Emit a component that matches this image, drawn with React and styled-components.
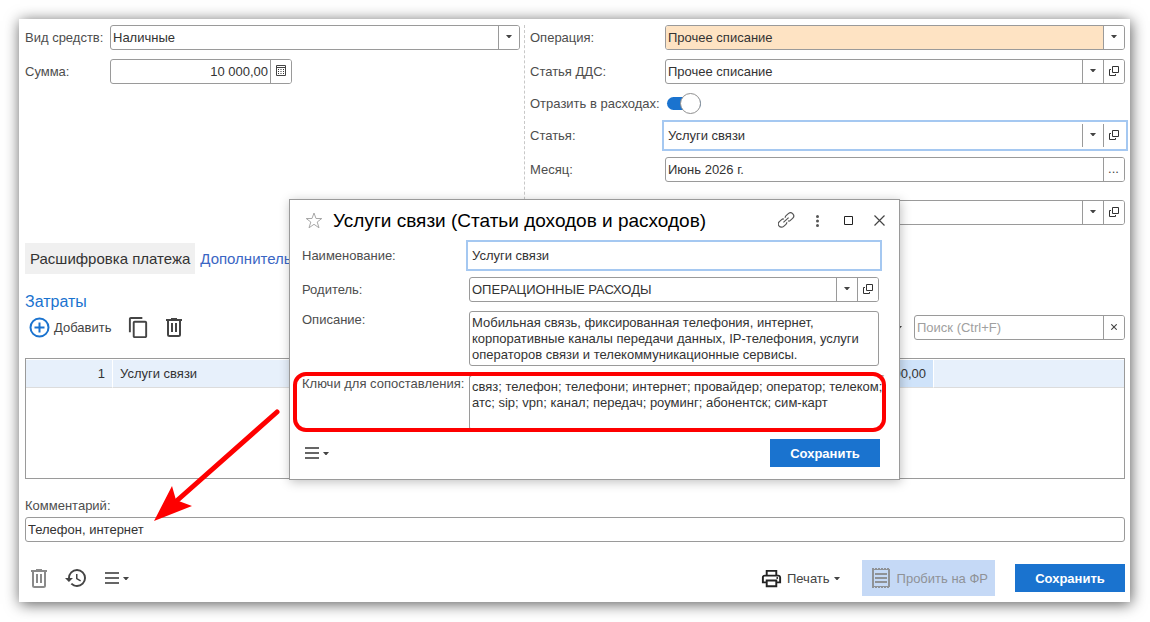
import styled, { createGlobalStyle } from "styled-components";
import { MdContentCopy, MdHistory, MdOutlinePrint } from "react-icons/md";

const GlobalStyle = createGlobalStyle`
  * {
    box-sizing: border-box;
  }

  body {
    margin: 0;
    background: #fff;
    color: #333;
    font-family: "Liberation Sans", Arial, sans-serif;
    font-size: 13px;
  }

  input, select, textarea, button {
    font: inherit;
    color: inherit;
  }
`;

const Page = styled.div`
  padding: 19px 20px 20px 19px;
`;

const Window = styled.main`
  position: relative;
  padding: 6px 5px 6px 6px;
  background: #fff;
  box-shadow: 1px 2px 14px rgba(0, 0, 0, 0.65);
`;

const FormGrid = styled.div`
  display: grid;
  grid-template-columns: 45fr 55fr;
`;

const Column = styled.div`
  display: flex;
  flex-direction: column;
  gap: 9px;
`;

const RightColumn = styled(Column)`
  margin-left: 4px;
  padding-left: 5px;
  border-left: 1px dashed #c8c8c8;
`;

const Row = styled.div`
  display: flex;
  align-items: ${(p) => (p.$top ? "flex-start" : "center")};
  min-height: ${(p) => (p.$short ? "21px" : "25px")};
  margin-top: ${(p) => (p.$spaced ? "9px" : "0")};
`;

const Label = styled.label`
  flex: none;
  width: ${(p) => p.$width || "auto"};
  line-height: 18px;
  white-space: nowrap;
  color: #4d4d4d;
`;

const Field = styled.div`
  display: flex;
  flex: ${(p) => (p.$width ? "none" : "1")};
  width: ${(p) => p.$width || "auto"};
  min-width: 0;
  height: 25px;
  overflow: hidden;
  background: #fff;
  border: 1px solid ${(p) => (p.$focused ? "transparent" : "#9a9a9a")};
  border-radius: ${(p) => (p.$focused ? "0" : "3px")};
  outline: ${(p) => (p.$focused ? "2px solid #a5c8f1" : "none")};
  outline-offset: 1px;
`;

const TextInput = styled.input`
  flex: 1;
  min-width: 0;
  padding: 0 2px;
  border: 0;
  outline: 0;
  background: transparent;
  text-align: ${(p) => (p.$right ? "right" : "left")};

  &::placeholder {
    color: #a0a0a0;
  }
`;

const Select = styled.select`
  flex: 1;
  min-width: 0;
  padding: 0 2px;
  border: 0;
  border-radius: 0;
  outline: 0;
  appearance: none;
  background: ${(p) => (p.$accent ? "#fee3c3" : "transparent")};
`;

const FieldButton = styled.button`
  display: flex;
  flex: none;
  align-items: center;
  justify-content: center;
  width: 21px;
  padding: 0 1px 2px 0;
  border: 0;
  border-left: 1px solid #9a9a9a;
  background: #fff;
  color: #444;
`;

const TextArea = styled.textarea`
  flex: 1;
  min-width: 0;
  height: 55px;
  padding: 3px 0 3px 2px;
  border: 1px solid #9a9a9a;
  border-radius: 3px;
  outline: 0;
  resize: none;
  overflow: hidden;
  line-height: 16px;
  white-space: pre;
`;

const KeysArea = styled(TextArea)`
  margin-right: -6px;
  border-color: #9a9a9a transparent transparent #9a9a9a;
`;

const Toggle = styled.input`
  display: flex;
  align-items: center;
  justify-content: flex-end;
  width: 34px;
  height: 13px;
  margin: 0 2px;
  appearance: none;
  border-radius: 7px;
  background: #1a73cf;

  &::after {
    content: "";
    flex: none;
    width: 19px;
    height: 19px;
    border: 1px solid #8f8f8f;
    border-radius: 50%;
    background: #fff;
  }
`;

const Tabs = styled.nav`
  display: flex;
  margin-top: 18px;
`;

const Tab = styled.button`
  height: 31px;
  padding: 0 5px;
  border: 0;
  background: ${(p) => (p.$active ? "#f0f0f0" : "transparent")};
  color: ${(p) => (p.$active ? "#333" : "#3a66c4")};
  font-size: 15px;
  white-space: nowrap;
`;

const SectionTitle = styled.h2`
  margin: 19px 0 4px;
  color: #1a73cf;
  font-size: 16px;
  font-weight: normal;
  line-height: 18px;
`;

const Toolbar = styled.div`
  display: flex;
  align-items: center;
  height: 25px;
  padding-left: 4px;
`;

const ToolButton = styled.button`
  display: flex;
  align-items: center;
  gap: 4px;
  margin: 0;
  padding: 0;
  border: 0;
  background: transparent;
  color: #444;
`;

const TitleButton = styled(ToolButton)`
  justify-content: center;
  width: 31px;
  height: 24px;
`;

const ToolGroup = styled.div`
  display: flex;
  align-items: center;
  gap: ${(p) => p.$gap || "0"};
`;

const Spacer = styled.div`
  flex: 1;
`;

const TableBox = styled.div`
  min-height: 121px;
  margin-top: 18px;
  border: 1px solid #9a9a9a;
`;

const Table = styled.table`
  width: 100%;
  table-layout: fixed;
  border-collapse: separate;
  border-spacing: 0;
`;

const Cell = styled.td`
  width: ${(p) => p.$width || "auto"};
  height: 29px;
  padding: 0 7px;
  border-top: 1px solid #fff;
  border-right: 1px solid #fff;
  border-bottom: 1px solid #dcdcdc;
  background: ${(p) => (p.$selected ? "#cfe3fa" : "#e7f0fb")};
  background-clip: padding-box;
  text-align: ${(p) => (p.$right ? "right" : "left")};

  &:last-child {
    border-right: 0;
  }
`;

const CommentBlock = styled.div`
  display: flex;
  flex-direction: column;
  gap: 2px;
  margin-top: 18px;

  ${Field} {
    flex: none;
  }
`;

const Footer = styled.footer`
  display: flex;
  align-items: center;
  height: 36px;
  margin-top: 18px;
  padding-left: 6px;
`;

const PrimaryButton = styled.button`
  width: 110px;
  height: 28px;
  padding: 0;
  border: 0;
  background: #1a73cf;
  color: #fff;
  font-weight: bold;
`;

const ReceiptButton = styled.button`
  display: flex;
  align-items: center;
  gap: 7px;
  height: 36px;
  margin: 0 20px 0 22px;
  padding: 0 7px 0 10px;
  border: 0;
  background: #c5d9f6;
  color: #8f9296;
`;

const Dialog = styled.section`
  position: absolute;
  top: 180px;
  left: 270px;
  width: 611px;
  padding: 0 20px 12px 12px;
  border: 1px solid #9a9a9a;
  background: #fff;
  box-shadow: 1px 2px 10px rgba(0, 0, 0, 0.25);
`;

const DialogHeader = styled.header`
  display: flex;
  align-items: center;
  height: 41px;
  margin: 0 -16px 2px 0;
  padding-left: 3px;
`;

const DialogTitle = styled.h1`
  flex: 1;
  margin: 0 0 0 10px;
  color: #000;
  font-size: 19px;
  font-weight: normal;
  white-space: nowrap;
`;

const DialogFooter = styled.footer`
  display: flex;
  align-items: center;
  justify-content: space-between;
  height: 28px;
  margin: 9px -1px 0 3px;
`;

const Highlight = styled.div`
  position: absolute;
  top: 172px;
  left: 3px;
  right: 13px;
  height: 60px;
  border: 4px solid #fe0000;
  border-radius: 13px;
  pointer-events: none;
`;

const Arrow = styled.svg`
  position: absolute;
  top: 386px;
  left: 131px;
  pointer-events: none;
`;

function Caret() {
  return (
    <svg width="6" height="3" viewBox="0 0 6 3" aria-hidden="true">
      <path d="M0 0h6L3.5 3h-1z" fill="#444" />
    </svg>
  );
}

function OpenIcon() {
  return (
    <svg width="10" height="10" viewBox="0 0 10 10" fill="none" stroke="#333" aria-hidden="true">
      <path d="M3.5 0.5h6v6h-6z" />
      <path d="M2 3.5H0.5v6h6V8" />
    </svg>
  );
}

function CalculatorIcon() {
  return (
    <svg width="10" height="11" viewBox="0 0 10 11" aria-hidden="true">
      <path d="M0.5 0.5h9v10h-9zM0 2.5h10" fill="none" stroke="#444" />
      <path
        d="M2 4h1v1H2zM4.5 4h1v1h-1zM7 4h1v1H7zM2 6h1v1H2zM4.5 6h1v1h-1zM7 6h1v1H7zM2 8h1v1H2zM4.5 8h1v1h-1zM7 8h1v1H7z"
        fill="#333"
      />
    </svg>
  );
}

function AddIcon() {
  return (
    <svg width="21" height="21" viewBox="0 0 21 21" fill="none" stroke="#1a73cf" strokeWidth="2" aria-hidden="true">
      <circle cx="10.5" cy="10.5" r="9" />
      <path d="M10.5 5.5v10M5.5 10.5h10" />
    </svg>
  );
}

function TrashIcon({ color = "#444" }) {
  return (
    <svg width="16" height="19" viewBox="0 0 16 19" fill="none" stroke={color} strokeWidth="2" aria-hidden="true">
      <path d="M0 2h16M5 1h6" />
      <path d="M2 3v13.5q0 1.5 1.5 1.5h9q1.5 0 1.5-1.5V3" />
      <path d="M6 5v9M10 5v9" />
    </svg>
  );
}

function MenuIcon() {
  return (
    <svg width="14" height="12" viewBox="0 0 14 12" aria-hidden="true">
      <path d="M0 0h14v2H0zM0 5h14v2H0zM0 10h14v2H0z" fill="#666" />
    </svg>
  );
}

function StarIcon() {
  return (
    <svg width="18" height="17" viewBox="0 0 18 17" fill="none" stroke="#a8a8a8" aria-hidden="true">
      <path d="M9 1l2 5.5h5.8l-4.6 3.5 1.8 5.8L9 12.3l-5 3.5 1.8-5.8L1.2 6.5H7z" />
    </svg>
  );
}

function LinkIcon() {
  return (
    <svg width="18" height="18" viewBox="0 0 18 18" fill="none" stroke="#555" strokeWidth="1.2" aria-hidden="true">
      <g transform="rotate(-42 8 8)">
        <path d="M7 10q-.4 1.2-2 1.2H2a3.2 3.200 0 0 1 0-6.4h3q1.600 0 2 1.200" />
        <path d="M9 6q.4-1.200 2-1.200h3a3.200 3.200 0 0 1 0 6.400h-3q-1.600 0-2-1.200" />
        <path d="M4.500 8h7" />
      </g>
    </svg>
  );
}

function DotsIcon() {
  return (
    <svg width="3" height="12" viewBox="0 0 3 12" fill="#555" aria-hidden="true">
      <circle cx="1.5" cy="1.5" r="1.5" />
      <circle cx="1.5" cy="6" r="1.5" />
      <circle cx="1.5" cy="10.5" r="1.5" />
    </svg>
  );
}

function MaximizeIcon() {
  return (
    <svg width="9" height="9" viewBox="0 0 9 9" aria-hidden="true">
      <path d="M0.5 0.5h8v8h-8z" fill="none" stroke="#222" />
    </svg>
  );
}

function CloseIcon({ size = 11 }) {
  return (
    <svg width={size} height={size} viewBox="0 0 11 11" aria-hidden="true">
      <path d="M0.5 0.5l10 10M10.5 0.5l-10 10" stroke="#444" strokeWidth={size < 8 ? 2 : 1.2} />
    </svg>
  );
}

function ReceiptIcon() {
  return (
    <svg width="18" height="20" viewBox="0 0 18 20" fill="none" stroke="#8f9296" aria-hidden="true">
      <path d="M1 1v18M17 1v18M3 6h12M3 10h12M3 14h12" strokeWidth="2" />
      <path d="M0 0.5h18M0 19.5h18" strokeDasharray="2 1" />
      <path d="M1 1.500h16M1 18.500h16" />
    </svg>
  );
}

function SelectField({ id, value, accent, focused, open }) {
  return (
    <Field $focused={focused}>
      <Select id={id} $accent={accent} defaultValue={value}>
        <option>{value}</option>
      </Select>
      <FieldButton type="button" aria-label="Выбрать">
        <Caret />
      </FieldButton>
      {open && (
        <FieldButton type="button" aria-label="Открыть">
          <OpenIcon />
        </FieldButton>
      )}
    </Field>
  );
}

function CategoryDialog() {
  const labelWidth = "167px";

  return (
    <Dialog role="dialog" aria-labelledby="dialog-title">
      <DialogHeader>
        <ToolButton type="button" aria-label="В избранное">
          <StarIcon />
        </ToolButton>
        <DialogTitle id="dialog-title">Услуги связи (Статьи доходов и расходов)</DialogTitle>
        <ToolGroup>
          <TitleButton type="button" aria-label="Ссылка">
            <LinkIcon />
          </TitleButton>
          <TitleButton type="button" aria-label="Ещё">
            <DotsIcon />
          </TitleButton>
          <TitleButton type="button" aria-label="Развернуть">
            <MaximizeIcon />
          </TitleButton>
          <TitleButton type="button" aria-label="Закрыть">
            <CloseIcon />
          </TitleButton>
        </ToolGroup>
      </DialogHeader>
      <Column>
        <Row>
          <Label htmlFor="name" $width={labelWidth}>Наименование:</Label>
          <Field $focused>
            <TextInput id="name" defaultValue="Услуги связи" />
          </Field>
        </Row>
        <Row>
          <Label htmlFor="parent" $width={labelWidth}>Родитель:</Label>
          <SelectField id="parent" value="ОПЕРАЦИОННЫЕ РАСХОДЫ" open />
        </Row>
        <Row $top>
          <Label htmlFor="description" $width={labelWidth}>Описание:</Label>
          <TextArea
            id="description"
            defaultValue={
              "Мобильная связь, фиксированная телефония, интернет,\nкорпоративные каналы передачи данных, IP-телефония, услуги\nоператоров связи и телекоммуникационные сервисы."
            }
          />
        </Row>
        <Row $top>
          <Label htmlFor="keys" $width={labelWidth}>Ключи для сопоставления:</Label>
          <KeysArea
            id="keys"
            defaultValue={
              "связ; телефон; телефони; интернет; провайдер; оператор; телеком;\nатс; sip; vpn; канал; передач; роуминг; абонентск; сим-карт"
            }
          />
        </Row>
      </Column>
      <DialogFooter>
        <ToolButton type="button" aria-label="Меню">
          <MenuIcon />
          <Caret />
        </ToolButton>
        <PrimaryButton type="button">Сохранить</PrimaryButton>
      </DialogFooter>
      <Highlight />
    </Dialog>
  );
}

export default function App() {
  const leftLabel = "85px";
  const rightLabel = "135px";

  return (
    <Page>
      <GlobalStyle />
      <Window>
        <FormGrid>
          <Column>
            <Row>
              <Label htmlFor="kind" $width={leftLabel}>Вид средств:</Label>
              <SelectField id="kind" value="Наличные" />
            </Row>
            <Row>
              <Label htmlFor="sum" $width={leftLabel}>Сумма:</Label>
              <Field $width="182px">
                <TextInput id="sum" $right defaultValue="10 000,00" />
                <FieldButton type="button" aria-label="Калькулятор">
                  <CalculatorIcon />
                </FieldButton>
              </Field>
            </Row>
          </Column>
          <RightColumn>
            <Row>
              <Label htmlFor="operation" $width={rightLabel}>Операция:</Label>
              <SelectField id="operation" value="Прочее списание" accent />
            </Row>
            <Row>
              <Label htmlFor="dds" $width={rightLabel}>Статья ДДС:</Label>
              <SelectField id="dds" value="Прочее списание" open />
            </Row>
            <Row $short>
              <Label htmlFor="expense" $width={rightLabel}>Отразить в расходах:</Label>
              <Toggle id="expense" type="checkbox" defaultChecked />
            </Row>
            <Row>
              <Label htmlFor="category" $width={rightLabel}>Статья:</Label>
              <SelectField id="category" value="Услуги связи" focused open />
            </Row>
            <Row>
              <Label htmlFor="month" $width={rightLabel}>Месяц:</Label>
              <Field>
                <TextInput id="month" defaultValue="Июнь 2026 г." />
                <FieldButton type="button" aria-label="Выбрать месяц">...</FieldButton>
              </Field>
            </Row>
            <Row $spaced>
              <Label htmlFor="department" $width={rightLabel} />
              <SelectField id="department" value="" open />
            </Row>
          </RightColumn>
        </FormGrid>

        <Tabs>
          <Tab type="button" $active>Расшифровка платежа</Tab>
          <Tab type="button">Дополнительно</Tab>
        </Tabs>

        <SectionTitle>Затраты</SectionTitle>
        <Toolbar>
          <ToolGroup $gap="16px">
            <ToolButton type="button">
              <AddIcon />
              Добавить
            </ToolButton>
            <ToolButton type="button" aria-label="Скопировать">
              <MdContentCopy size={23} />
            </ToolButton>
            <ToolButton type="button" aria-label="Удалить строку">
              <TrashIcon />
            </ToolButton>
          </ToolGroup>
          <Spacer />
          <ToolGroup $gap="12px">
            <ToolButton type="button">
              Еще
              <Caret />
            </ToolButton>
            <Field $width="211px">
              <TextInput aria-label="Поиск" placeholder="Поиск (Ctrl+F)" />
              <FieldButton type="button" aria-label="Очистить">
                <CloseIcon size={6} />
              </FieldButton>
            </Field>
          </ToolGroup>
        </Toolbar>

        <TableBox>
          <Table>
            <tbody>
              <tr>
                <Cell $width="87px" $right>1</Cell>
                <Cell>Услуги связи</Cell>
                <Cell $width="120px" $right $selected>10 000,00</Cell>
                <Cell $width="190px" />
              </tr>
            </tbody>
          </Table>
        </TableBox>

        <CommentBlock>
          <Label htmlFor="comment">Комментарий:</Label>
          <Field>
            <TextInput id="comment" defaultValue="Телефон, интернет" />
          </Field>
        </CommentBlock>

        <Footer>
          <ToolGroup $gap="17px">
            <ToolButton type="button" aria-label="Удалить">
              <TrashIcon color="#8a8a8a" />
            </ToolButton>
            <ToolButton type="button" aria-label="История">
              <MdHistory size={24} />
            </ToolButton>
            <ToolButton type="button" aria-label="Меню">
              <MenuIcon />
              <Caret />
            </ToolButton>
          </ToolGroup>
          <Spacer />
          <ToolButton type="button">
            <MdOutlinePrint size={23} color="#222" />
            Печать
            <Caret />
          </ToolButton>
          <ReceiptButton type="button" disabled>
            <ReceiptIcon />
            Пробить на ФР
          </ReceiptButton>
          <PrimaryButton type="button">Сохранить</PrimaryButton>
        </Footer>

        <CategoryDialog />

        <Arrow width="132" height="120" viewBox="0 0 132 120" aria-hidden="true">
          <path d="M127 7L22 100" stroke="#fe0000" strokeWidth="5" strokeLinecap="round" />
          <path d="M4 116L22 81L26 95L42 101z" fill="#fe0000" />
        </Arrow>
      </Window>
    </Page>
  );
}
